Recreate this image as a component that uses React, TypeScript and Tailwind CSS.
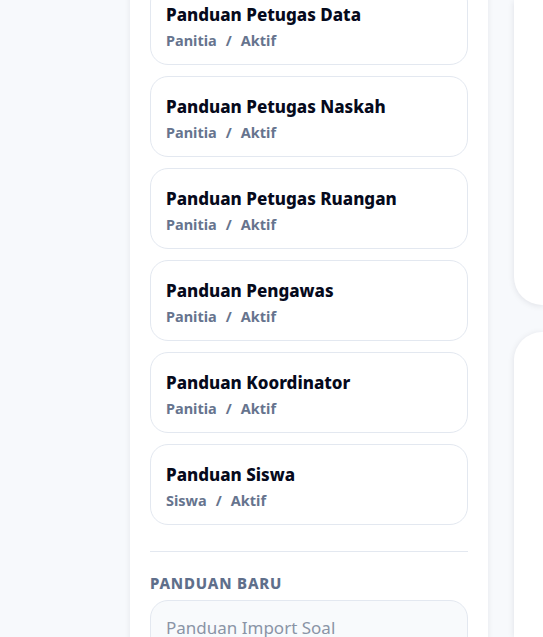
const guides = [
  { title: 'Panduan Petugas Data', role: 'Panitia', status: 'Aktif' },
  { title: 'Panduan Petugas Naskah', role: 'Panitia', status: 'Aktif' },
  { title: 'Panduan Petugas Ruangan', role: 'Panitia', status: 'Aktif' },
  { title: 'Panduan Pengawas', role: 'Panitia', status: 'Aktif' },
  { title: 'Panduan Koordinator', role: 'Panitia', status: 'Aktif' },
  { title: 'Panduan Siswa', role: 'Siswa', status: 'Aktif' },
];

export default function App() {
  return (
    <div
      className="h-[637px] w-[543px] overflow-hidden bg-[#f7f9fc] flex"
      style={{ fontFamily: '"Noto Sans", "Open Sans", sans-serif' }}
    >
      <div className="w-[130px] shrink-0" />

      {/* guide list panel */}
      <div className="w-[358px] shrink-0 bg-white shadow-[0_1px_6px_rgba(15,23,42,0.08)] px-5 -mt-[16px] h-[700px]">
        <div className="flex flex-col gap-[11px]">
          {guides.map((g) => (
            <div
              key={g.title}
              className="h-[81px] rounded-[18px] border border-[#e3e8f0] bg-white px-[15px] pt-[18px]"
            >
              <div className="text-[17px] leading-[24px] font-extrabold text-[#060a1c]">{g.title}</div>
              <div className="mt-[3px] text-[14.5px] leading-[20px] font-bold text-[#66748e]">
                {g.role}
                <span className="mx-[9px]">/</span>
                {g.status}
              </div>
            </div>
          ))}
        </div>

        <div className="mt-[26px] border-t border-[#e3e8f0]" />

        <div className="mt-[21px] text-[15px] leading-[20px] font-extrabold tracking-[0.8px] text-[#5f6f8b] uppercase">
          Panduan Baru
        </div>
        <div className="mt-[7px] h-[56px] rounded-[18px] border border-[#e3e8f0] bg-[#f8fafc] px-[15px] pt-[15px]">
          <span className="text-[17px] leading-[24px] text-[#8a94a6]">Panduan Import Soal</span>
        </div>
      </div>

      <div className="w-[26px] shrink-0" />

      {/* right column */}
      <div className="flex-1 flex flex-col gap-[27px]">
        <div className="h-[305px] rounded-bl-[28px] bg-white shadow-[0_1px_6px_rgba(15,23,42,0.1)]" />
        <div className="flex-1 rounded-tl-[28px] bg-white shadow-[0_1px_6px_rgba(15,23,42,0.1)]" />
      </div>
    </div>
  );
}
